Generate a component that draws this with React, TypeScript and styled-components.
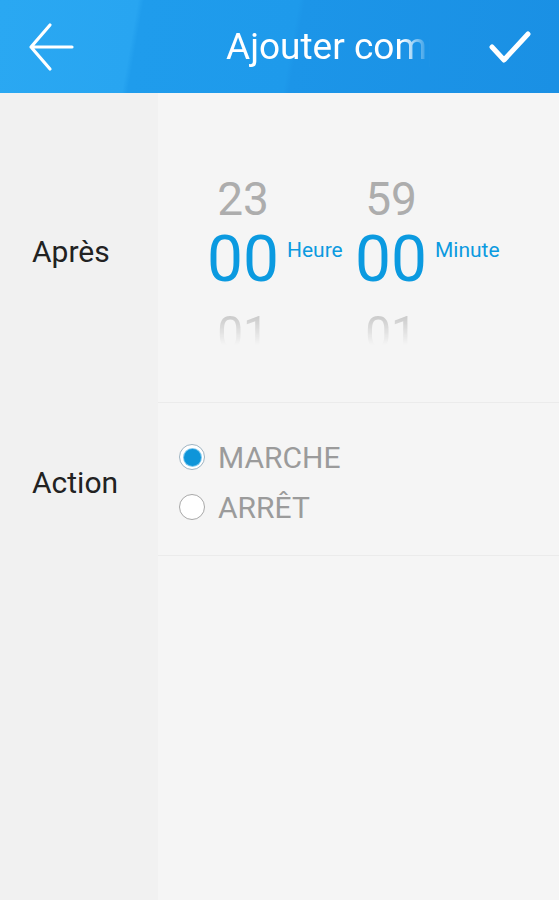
import React, { useState } from "react";
import styled, { createGlobalStyle } from "styled-components";

const GlobalStyle = createGlobalStyle`
  html, body {
    margin: 0;
    padding: 0;
    background: #f5f5f5;
    font-family: Roboto, "Liberation Sans", sans-serif;
  }
  #root {
    min-height: 100vh;
  }
`;

const Screen = styled.div`
  display: flex;
  flex-direction: column;
  width: 559px;
  height: 900px;
  overflow: hidden;
`;

const Toolbar = styled.header`
  height: 93px;
  flex-shrink: 0;
  display: flex;
  align-items: center;
  padding: 0 24px 0 26px;
  box-sizing: border-box;
  background: linear-gradient(
    100deg,
    #2aa8f2 0%,
    #28a5f1 24%,
    #1f9cec 25%,
    #1e9aeb 52%,
    #1c95e8 53%,
    #1a90e4 100%
  );
  box-shadow: 0 1px 2px rgba(0, 0, 0, 0.12);
`;

const IconButton = styled.button`
  width: 50px;
  height: 56px;
  padding: 0;
  border: none;
  background: none;
  display: flex;
  align-items: center;
  justify-content: center;
  cursor: pointer;
`;

const Title = styled.h1`
  margin: 0 0 0 150px;
  width: 204px;
  flex: none;
  overflow: hidden;
  white-space: nowrap;
  font-size: 37px;
  font-weight: 400;
  color: #fff;
  -webkit-mask-image: linear-gradient(to right, #000 86%, transparent 100%);
  mask-image: linear-gradient(to right, #000 86%, transparent 100%);
`;

const Spacer = styled.div`
  flex: 1;
`;

const Body = styled.main`
  flex: 1;
  display: flex;
  flex-direction: column;
`;

const Row = styled.section<{ $height?: number }>`
  display: grid;
  grid-template-columns: 158px 1fr;
  ${(p) => (p.$height ? `height: ${p.$height}px;` : "flex: 1;")}
`;

const Label = styled.div`
  background: #f1f1f1;
  display: flex;
  align-items: center;
  padding: 6px 0 0 32px;
  font-size: 30px;
  color: #222;
`;

const Cell = styled.div<{ $line?: boolean }>`
  background: #f5f5f5;
  border-bottom: ${(p) => (p.$line ? "1px solid #ebebeb" : "none")};
  display: flex;
  flex-direction: column;
`;

const Picker = styled.div`
  display: flex;
  padding: 76px 0 0 50px;
`;

const Wheel = styled.div`
  width: 70px;
  display: flex;
  flex-direction: column;
  align-items: center;
`;

const Digit = styled.div<{ $kind: "prev" | "cur" | "next" }>`
  font-size: ${(p) => (p.$kind === "cur" ? 64 : 46)}px;
  line-height: ${(p) => (p.$kind === "cur" ? 62 : 60)}px;
  height: ${(p) => (p.$kind === "next" ? 44 : p.$kind === "cur" ? 62 : 60)}px;
  margin-top: ${(p) => (p.$kind === "next" ? 12 : 0)}px;
  overflow: hidden;
  color: ${(p) => (p.$kind === "cur" ? "#0b9ae0" : "#adadad")};
  ${(p) =>
    p.$kind === "next" &&
    `-webkit-mask-image: linear-gradient(to bottom, rgba(0,0,0,0.85) 0%, transparent 95%);
     mask-image: linear-gradient(to bottom, rgba(0,0,0,0.85) 0%, transparent 95%);`}
`;

const Unit = styled.div`
  width: 78px;
  padding: 69px 0 0 9px;
  box-sizing: border-box;
  font-size: 21px;
  color: #0b9ae0;
`;

const Options = styled.div`
  display: flex;
  flex-direction: column;
  gap: 14px;
  padding: 36px 0 0 21px;
`;

const Option = styled.label`
  display: flex;
  align-items: center;
  gap: 13px;
  height: 36px;
  font-size: 30px;
  color: #9b9b9b;
  cursor: pointer;
`;

const Radio = styled.span<{ $checked: boolean }>`
  width: 26px;
  height: 26px;
  box-sizing: border-box;
  border-radius: 50%;
  border: 1.5px solid ${(p) => (p.$checked ? "#9fb4c2" : "#a8a8a8")};
  background: #fff;
  display: flex;
  align-items: center;
  justify-content: center;

  &::after {
    content: "";
    display: ${(p) => (p.$checked ? "block" : "none")};
    width: 17px;
    height: 17px;
    border-radius: 50%;
    background: #0e95d9;
    box-shadow: 0 0 0 1px #7cc8ee;
  }
`;

const BackIcon = () => (
  <svg width="46" height="50" viewBox="0 0 46 50" fill="none">
    <path
      d="M44 25H3M22 3L3 25l19 22"
      stroke="#fff"
      strokeWidth="3.2"
      strokeLinecap="round"
      strokeLinejoin="round"
    />
  </svg>
);

const CheckIcon = () => (
  <svg width="42" height="34" viewBox="0 0 42 34" fill="none">
    <path
      d="M3 17l12 13L39 4"
      stroke="#fff"
      strokeWidth="5"
      strokeLinecap="round"
      strokeLinejoin="round"
    />
  </svg>
);

const App = () => {
  const [action, setAction] = useState("on");

  return (
    <>
      <GlobalStyle />
      <Screen>
        <Toolbar>
          <IconButton aria-label="Retour">
            <BackIcon />
          </IconButton>
          <Title>Ajouter compte à rebours</Title>
          <Spacer />
          <IconButton aria-label="Valider">
            <CheckIcon />
          </IconButton>
        </Toolbar>
        <Body>
          <Row $height={310}>
            <Label>Après</Label>
            <Cell $line>
              <Picker>
                <Wheel>
                  <Digit $kind="prev">23</Digit>
                  <Digit $kind="cur">00</Digit>
                  <Digit $kind="next">01</Digit>
                </Wheel>
                <Unit>Heure</Unit>
                <Wheel>
                  <Digit $kind="prev">59</Digit>
                  <Digit $kind="cur">00</Digit>
                  <Digit $kind="next">01</Digit>
                </Wheel>
                <Unit>Minute</Unit>
              </Picker>
            </Cell>
          </Row>
          <Row $height={153}>
            <Label>Action</Label>
            <Cell $line>
              <Options>
                <Option onClick={() => setAction("on")}>
                  <Radio $checked={action === "on"} />
                  MARCHE
                </Option>
                <Option onClick={() => setAction("off")}>
                  <Radio $checked={action === "off"} />
                  ARRÊT
                </Option>
              </Options>
            </Cell>
          </Row>
          <Row>
            <Label />
            <Cell />
          </Row>
        </Body>
      </Screen>
    </>
  );
};

export default App;
